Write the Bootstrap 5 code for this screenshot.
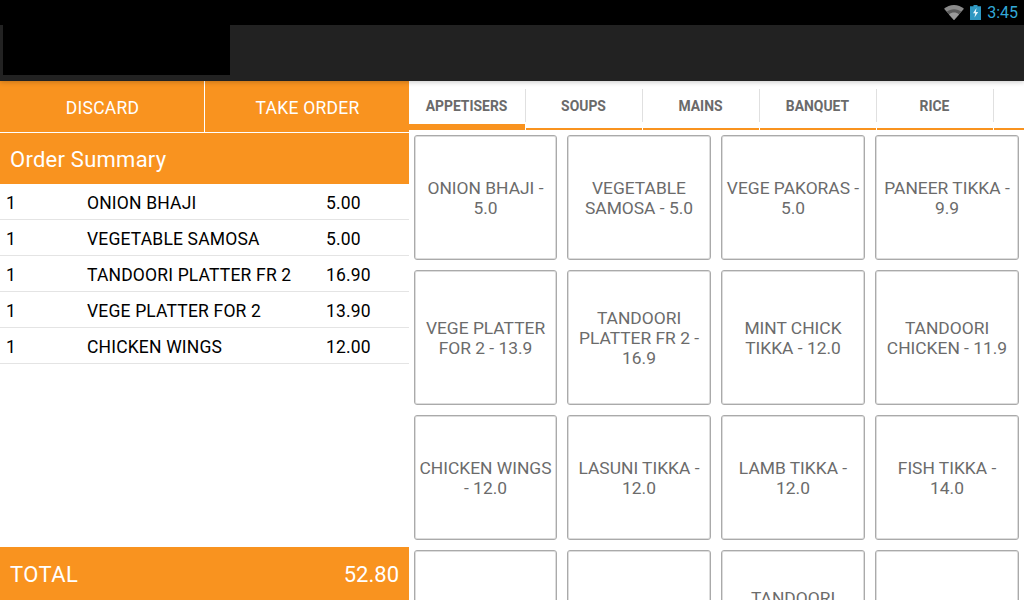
<!DOCTYPE html>
<html lang="en">
<head>
<meta charset="utf-8">
<title>Order</title>
<link href="https://cdn.jsdelivr.net/npm/bootstrap@5.3.0/dist/css/bootstrap.min.css" rel="stylesheet">
<style>
html, body { height: 600px; overflow: hidden; }
body { font-family: Roboto, "Liberation Sans", sans-serif; background: #fff; color: #000; }
.shell { width: 1024px; height: 600px; }
.status-strip { height: 25px; background: #000; color: #33a9d8; font-size: 16px; padding-right: 6px; gap: 6px; }
.app-strip { height: 56px; background: #222; padding-left: 3px; position: relative; z-index: 2; box-shadow: 0 1px 5px rgba(0,0,0,.22); }
.brand-block { width: 227px; height: 50px; background: #000; }
.main-area { height: 519px; }
.order-side { width: 409px; flex: none; }
.order-actions { height: 52px; border-bottom: 1px solid #fff; }
.order-btn { flex: 1 1 0; border: 0; border-radius: 0; background: #f9931f; color: #fff; font-size: 17.5px; letter-spacing: .25px; padding: 3px 0 0 1px; height: 51px; }
.order-btn:hover { background: #f9931f; color: #fff; }
.order-btn + .order-btn { border-left: 1px solid #fff; }
.order-head { height: 51px; background: #f9931f; color: #fff; font-size: 22px; letter-spacing: .25px; padding: 2px 0 0 10px; }
.order-lines { flex: 1 1 auto; }
.order-line { height: 36px; border-bottom: 1px solid #e4e4e4; font-size: 17.5px; letter-spacing: .17px; padding-top: 3px; }
.line-qty { width: 87px; padding-left: 6px; }
.line-name { width: 239px; white-space: nowrap; }
.order-total { height: 53px; background: #f9931f; color: #fff; font-size: 22px; padding: 2px 10px 0; }
.total-word { letter-spacing: .4px; }
.menu-side { width: 615px; flex: none; overflow: hidden; }
.tab-strip { height: 49px; flex: none; flex-wrap: nowrap; overflow: hidden; }
.tab-cell { width: 117px; flex: none; height: 49px; position: relative; color: #666; font-size: 13.9px; font-weight: 700; padding: 2px 2px 0 0; }
.tab-cell::before { content: ""; position: absolute; right: 0; top: 8px; height: 33px; width: 1px; background: #e0e0e0; }
.tab-cell::after { content: ""; position: absolute; left: 0; right: 1px; bottom: 0; height: 2px; background: #f9931f; }
.tab-cell.tab-on::after { height: 6px; }
.tab-label { color: #6a6a6a; text-decoration: none; }
.menu-grid { display: grid; grid-template-columns: 143px 144px 144px 144px; grid-template-rows: 125px 135px 125px 135px; gap: 10px; padding: 5px 5px 0; flex: none; }
.menu-item { border: 1px solid #aaa; box-shadow: inset 0 0 0 1px #ddd; border-radius: 3px; background: #fff; color: #6b6b6b; font-size: 17.4px; line-height: 20px; padding: 0 3px; display: flex; align-items: center; justify-content: center; text-align: center; }
.menu-item:hover { background: #fff; color: #6b6b6b; border-color: #aaa; }
</style>
</head>
<body>
<div class="shell d-flex flex-column">
  <div class="status-strip d-flex align-items-center justify-content-end">
    <svg width="20" height="15" viewBox="0 0 20 15" aria-hidden="true"><path d="M10 15 0 3.8C2.8 1.4 6.2 0 10 0s7.2 1.4 10 3.8z" fill="#8a8a8a"/><path d="M10 15 2.6 6.8C4.6 5.2 7.2 4.2 10 4.2s5.4 1 7.4 2.6z" fill="#5a5a5a"/><path d="M10 15 5 9.4C6.4 8.2 8.1 7.6 10 7.6s3.6.6 5 1.8z" fill="#9a9a9a"/></svg>
    <svg width="11" height="15" viewBox="0 0 11 15" aria-hidden="true"><path d="M3.5 0h4v1.3H11V15H0V1.3h3.5z" fill="#2f98c2"/><path d="M6.5 3 3 8.2h2.2L4.5 12.6 8.2 7H5.8z" fill="#e8f6fb"/></svg>
    <span>3:45</span>
  </div>
  <div class="app-strip d-flex"><div class="brand-block"></div></div>
  <div class="main-area d-flex">
    <div class="order-side d-flex flex-column">
      <div class="order-actions d-flex">
        <button type="button" class="btn order-btn">DISCARD</button>
        <button type="button" class="btn order-btn">TAKE ORDER</button>
      </div>
      <div class="order-head d-flex align-items-center">Order Summary</div>
      <div class="order-lines">
        <div class="order-line d-flex align-items-center"><span class="line-qty">1</span><span class="line-name">ONION BHAJI</span><span>5.00</span></div>
        <div class="order-line d-flex align-items-center"><span class="line-qty">1</span><span class="line-name">VEGETABLE SAMOSA</span><span>5.00</span></div>
        <div class="order-line d-flex align-items-center"><span class="line-qty">1</span><span class="line-name">TANDOORI PLATTER FR 2</span><span>16.90</span></div>
        <div class="order-line d-flex align-items-center"><span class="line-qty">1</span><span class="line-name">VEGE PLATTER FOR 2</span><span>13.90</span></div>
        <div class="order-line d-flex align-items-center"><span class="line-qty">1</span><span class="line-name">CHICKEN WINGS</span><span>12.00</span></div>
      </div>
      <div class="order-total d-flex align-items-center justify-content-between"><span class="total-word">TOTAL</span><span>52.80</span></div>
    </div>
    <div class="menu-side d-flex flex-column">
      <nav class="nav tab-strip">
        <div class="tab-cell tab-on d-flex align-items-center justify-content-center"><a class="tab-label" href="#">APPETISERS</a></div>
        <div class="tab-cell d-flex align-items-center justify-content-center"><a class="tab-label" href="#">SOUPS</a></div>
        <div class="tab-cell d-flex align-items-center justify-content-center"><a class="tab-label" href="#">MAINS</a></div>
        <div class="tab-cell d-flex align-items-center justify-content-center"><a class="tab-label" href="#">BANQUET</a></div>
        <div class="tab-cell d-flex align-items-center justify-content-center"><a class="tab-label" href="#">RICE</a></div>
        <div class="tab-cell d-flex align-items-center justify-content-center"></div>
      </nav>
      <div class="menu-grid">
        <button type="button" class="btn menu-item">ONION BHAJI - 5.0</button>
        <button type="button" class="btn menu-item">VEGETABLE SAMOSA - 5.0</button>
        <button type="button" class="btn menu-item">VEGE PAKORAS - 5.0</button>
        <button type="button" class="btn menu-item">PANEER TIKKA - 9.9</button>
        <button type="button" class="btn menu-item">VEGE PLATTER FOR 2 - 13.9</button>
        <button type="button" class="btn menu-item">TANDOORI PLATTER FR 2 - 16.9</button>
        <button type="button" class="btn menu-item">MINT CHICK TIKKA - 12.0</button>
        <button type="button" class="btn menu-item">TANDOORI CHICKEN - 11.9</button>
        <button type="button" class="btn menu-item">CHICKEN WINGS - 12.0</button>
        <button type="button" class="btn menu-item">LASUNI TIKKA - 12.0</button>
        <button type="button" class="btn menu-item">LAMB TIKKA - 12.0</button>
        <button type="button" class="btn menu-item">FISH TIKKA - 14.0</button>
        <button type="button" class="btn menu-item"></button>
        <button type="button" class="btn menu-item"></button>
        <button type="button" class="btn menu-item">TANDOORI MIXED GRILL - 14.0</button>
        <button type="button" class="btn menu-item"></button>
      </div>
    </div>
  </div>
</div>
<script src="https://cdn.jsdelivr.net/npm/bootstrap@5.3.0/dist/js/bootstrap.bundle.min.js"></script>
</body>
</html>
